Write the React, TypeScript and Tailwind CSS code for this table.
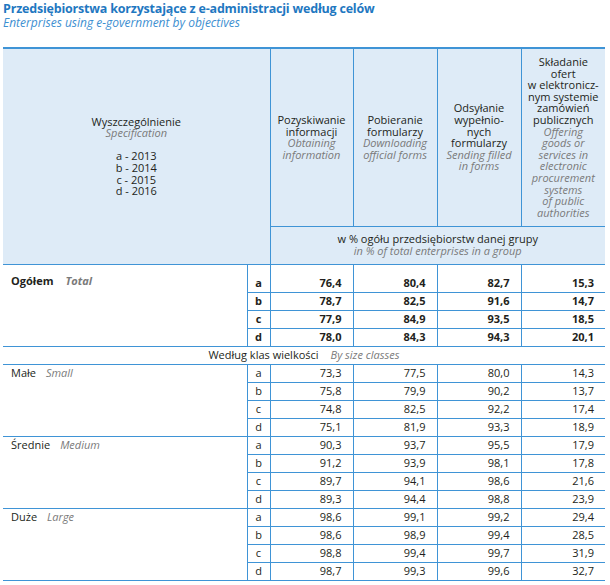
import React from 'react';

type Row = [string, string, string, string];

const GROUPS: { pl: string; en: string; bold?: boolean; rows: Row[] }[] = [
  {
    pl: 'Ogółem',
    en: 'Total',
    bold: true,
    rows: [
      ['76,4', '80,4', '82,7', '15,3'],
      ['78,7', '82,5', '91,6', '14,7'],
      ['77,9', '84,9', '93,5', '18,5'],
      ['78,0', '84,3', '94,3', '20,1'],
    ],
  },
  {
    pl: 'Małe',
    en: 'Small',
    rows: [
      ['73,3', '77,5', '80,0', '14,3'],
      ['75,8', '79,9', '90,2', '13,7'],
      ['74,8', '82,5', '92,2', '17,4'],
      ['75,1', '81,9', '93,3', '18,9'],
    ],
  },
  {
    pl: 'Średnie',
    en: 'Medium',
    rows: [
      ['90,3', '93,7', '95,5', '17,9'],
      ['91,2', '93,9', '98,1', '17,8'],
      ['89,7', '94,1', '98,6', '21,6'],
      ['89,3', '94,4', '98,8', '23,9'],
    ],
  },
  {
    pl: 'Duże',
    en: 'Large',
    rows: [
      ['98,6', '99,1', '99,2', '29,4'],
      ['98,6', '98,9', '99,4', '28,5'],
      ['98,8', '99,4', '99,7', '31,9'],
      ['98,7', '99,3', '99,6', '32,7'],
    ],
  },
];

const LETTERS = ['a', 'b', 'c', 'd'];

function HeadCell({ pl, en }: { pl: string[]; en: string[] }) {
  return (
    <th className="border-l border-[#3f94d6] px-1 align-middle font-normal">
      {pl.map((l) => (
        <div key={l}>{l}</div>
      ))}
      {en.map((l) => (
        <div key={l} className="italic text-[#7a7a7a]">
          {l}
        </div>
      ))}
    </th>
  );
}

function Group({ group, first }: { group: (typeof GROUPS)[number]; first?: boolean }) {
  const weight = group.bold ? 'font-bold' : 'font-normal';
  return (
    <>
      {group.rows.map((row, i) => {
        const top = i === 0;
        const h = top && first ? 'h-[28px]' : 'h-[18px]';
        const valign = top && first ? 'align-bottom pb-[3px]' : 'align-middle';
        return (
          <tr key={i} className={h}>
            {top && (
              <td
                rowSpan={4}
                className={`border-t border-[#3f94d6] align-top pl-[8px] ${first ? 'pt-[10px]' : 'pt-[2px]'}`}
              >
                <span className={weight}>{group.pl}</span>
                <span className={`italic text-[#7a7a7a] ${first ? 'ml-[12px] font-bold' : 'ml-[10px]'}`}>
                  {group.en}
                </span>
              </td>
            )}
            <td className={`border-t border-l border-r border-[#3f94d6] text-center ${valign} ${weight}`}>
              {LETTERS[i]}
            </td>
            {row.map((v, j) => (
              <td
                key={j}
                className={`border-t ${j > 0 ? 'border-l' : ''} border-[#3f94d6] text-right pr-[11px] ${valign} ${weight}`}
              >
                {v}
              </td>
            ))}
          </tr>
        );
      })}
    </>
  );
}

export default function App() {
  return (
    <div className="w-[610px] h-[585px] bg-white overflow-hidden font-['Open_Sans',sans-serif] text-[#231f20]">
      <div className="pl-[3px] pt-[1px]">
        <h1 className="text-[12.5px] leading-[15px] font-bold text-[#1f78c1] tracking-[-0.2px]">
          Przedsiębiorstwa korzystające z e-administracji według celów
        </h1>
        <p className="text-[12px] leading-[14px] italic text-[#3d8fd1]">
          Enterprises using e-government by objectives
        </p>
      </div>

      <table className="table-fixed border-collapse w-[602px] ml-[3px] mt-[17px] text-[11px] leading-[11.6px]">
        <colgroup>
          <col className="w-[244px]" />
          <col className="w-[23px]" />
          <col className="w-[83px]" />
          <col className="w-[84px]" />
          <col className="w-[84px]" />
          <col className="w-[84px]" />
        </colgroup>
        <thead className="bg-[#deebf7]">
          <tr className="h-[178px] border-t-2 border-[#3f94d6]">
            <th colSpan={2} rowSpan={2} className="align-middle font-normal">
              <div>Wyszczególnienie</div>
              <div className="italic text-[#7a7a7a]">Specification</div>
              <div className="h-[11.6px]" />
              <div>a - 2013</div>
              <div>b - 2014</div>
              <div>c - 2015</div>
              <div>d - 2016</div>
            </th>
            <HeadCell pl={['Pozyskiwanie', 'informacji']} en={['Obtaining', 'information']} />
            <HeadCell pl={['Pobieranie', 'formularzy']} en={['Downloading', 'official forms']} />
            <HeadCell
              pl={['Odsyłanie', 'wypełnio-', 'nych', 'formularzy']}
              en={['Sending filled', 'in forms']}
            />
            <HeadCell
              pl={['Składanie', 'ofert', 'w elektronicz-', 'nym systemie', 'zamówień', 'publicznych']}
              en={['Offering', 'goods or', 'services in', 'electronic', 'procurement', 'systems', 'of public', 'authorities']}
            />
          </tr>
          <tr className="h-[38px]">
            <th colSpan={4} className="border-t border-l border-[#3f94d6] font-normal align-middle pb-[1px]">
              <div>w % ogółu przedsiębiorstw danej grupy</div>
              <div className="italic text-[#7a7a7a]">in % of total enterprises in a group</div>
            </th>
          </tr>
        </thead>
        <tbody>
          <Group group={GROUPS[0]} first />
          <tr className="h-[18px]">
            <td colSpan={6} className="border-t border-[#3f94d6] text-center align-middle">
              Według klas wielkości
              <span className="italic text-[#7a7a7a] ml-[12px]">By size classes</span>
            </td>
          </tr>
          {GROUPS.slice(1).map((g) => (
            <Group key={g.pl} group={g} />
          ))}
          <tr>
            <td colSpan={6} className="border-t border-[#3f94d6] h-0 p-0" />
          </tr>
        </tbody>
      </table>
    </div>
  );
}
